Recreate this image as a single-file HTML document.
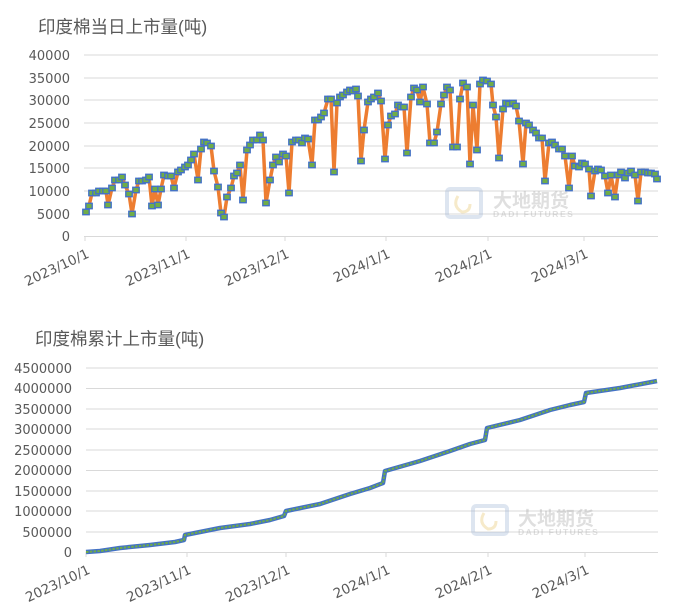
<!DOCTYPE html>
<html><head><meta charset="utf-8"><style>
html,body{margin:0;padding:0;background:#fff;}
svg text{font-family:"DejaVu Sans","Noto Sans CJK SC",sans-serif;fill:#595959;}
svg text.t{font-family:"Liberation Sans","Noto Sans CJK SC",sans-serif;}
</style></head><body>
<svg width="695" height="610" viewBox="0 0 695 610" xmlns="http://www.w3.org/2000/svg">
<defs>
<marker id="m" viewBox="0 0 8 7" refX="4" refY="3.5" markerWidth="8" markerHeight="7" markerUnits="userSpaceOnUse">
<rect x="0.8" y="0.8" width="6.4" height="5.4" fill="#70ad47" stroke="#4472c4" stroke-width="1.4"/>
</marker>
</defs>
<text class="t" x="38" y="33" font-size="17.5">印度棉当日上市量(吨)</text>
<g stroke="#d9d9d9" stroke-width="1">
<line x1="84" y1="55" x2="658" y2="55"/><line x1="84" y1="78" x2="658" y2="78"/>
<line x1="84" y1="100" x2="658" y2="100"/><line x1="84" y1="123" x2="658" y2="123"/>
<line x1="84" y1="146" x2="658" y2="146"/><line x1="84" y1="168" x2="658" y2="168"/>
<line x1="84" y1="191" x2="658" y2="191"/><line x1="84" y1="214" x2="658" y2="214"/>
<line x1="84" y1="236.5" x2="658" y2="236.5"/>
<line x1="85" y1="236" x2="85" y2="241"/><line x1="186" y1="236" x2="186" y2="241"/>
<line x1="285" y1="236" x2="285" y2="241"/><line x1="386" y1="236" x2="386" y2="241"/>
<line x1="488" y1="236" x2="488" y2="241"/><line x1="584" y1="236" x2="584" y2="241"/>
</g>
<g font-size="13" text-anchor="end">
<text x="70" y="60">40000</text><text x="70" y="83">35000</text><text x="70" y="105">30000</text>
<text x="70" y="128">25000</text><text x="70" y="151">20000</text><text x="70" y="173">15000</text>
<text x="70" y="196">10000</text><text x="70" y="219">5000</text><text x="70" y="241">0</text>
</g>
<g font-size="13.5" text-anchor="end">
<text transform="translate(90,257) rotate(-25)">2023/10/1</text>
<text transform="translate(191,257) rotate(-25)">2023/11/1</text>
<text transform="translate(290,257) rotate(-25)">2023/12/1</text>
<text transform="translate(391,257) rotate(-25)">2024/1/1</text>
<text transform="translate(493,257) rotate(-25)">2024/2/1</text>
<text transform="translate(589,257) rotate(-25)">2024/3/1</text>
</g>
<g opacity="0.35">
<rect x="447" y="189" width="34" height="28" rx="3" fill="none" stroke="#9fb6d6" stroke-width="4"/>
<path d="M458 196 q-6 10 4 16 q8 0 8-8" fill="none" stroke="#e8c46a" stroke-width="3"/>
<text class="t" x="493" y="207" font-size="19" font-weight="bold" style="fill:#a6a6a6">大地期货</text>
<text class="t" x="493" y="217" font-size="8.5" font-weight="bold" letter-spacing="1.5" style="fill:#a6a6a6">DADI FUTURES</text>
</g>
<polyline fill="none" stroke="#ed7d31" stroke-width="3.5" stroke-linejoin="round" marker-start="url(#m)" marker-mid="url(#m)" marker-end="url(#m)" points="86,212 89,206 92,193 96,193 99,191 103,191 106,191 108,205 112,188 115,180 119,180 122,177 125,185 129,194 132,214 136,190 139,181 142,181 146,180 149,177 152,206 155,189 158,205 161,189 164,175 168,176 171,176 174,188 178,172 181,170 185,167 188,165 191,160 194,154 198,180 201,149 204,142 207,143 211,146 214,171 218,187 221,213 224,217 227,197 231,188 234,176 237,173 240,165 243,200 247,150 250,145 253,140 257,140 260,135 263,140 266,203 270,180 273,165 276,157 279,162 283,154 286,156 289,193 292,142 296,140 299,140 302,143 305,138 308,139 312,165 315,120 318,120 321,117 324,113 328,99 331,99 334,172 337,103 340,97 343,95 347,92 350,90 353,91 356,89 358,96 361,161 364,130 368,102 371,99 374,97 378,93 381,101 385,159 388,125 391,116 395,114 398,105 401,107 404,107 407,153 411,97 414,88 417,90 420,102 423,87 427,104 430,143 434,143 437,132 441,104 444,95 447,87 450,90 453,147 457,147 460,99 463,83 467,87 470,164 473,105 477,150 480,84 483,80 487,81 491,84 493,105 496,117 499,158 503,109 506,103 509,104 513,103 516,106 519,121 523,164 526,123 529,125 533,130 536,133 539,138 542,138 545,181 549,143 552,142 555,145 559,149 562,149 565,156 569,188 572,156 575,166 579,167 582,163 585,164 589,169 591,196 595,171 598,169 601,170 605,176 608,193 611,175 615,197 618,175 621,172 625,178 628,173 631,171 635,175 638,201 641,172 645,172 648,173 651,173 655,174 657,179"/>

<text class="t" x="35" y="345" font-size="17.5">印度棉累计上市量(吨)</text>
<g stroke="#d9d9d9" stroke-width="1">
<line x1="86" y1="368" x2="658" y2="368"/><line x1="86" y1="388.5" x2="658" y2="388.5"/>
<line x1="86" y1="409" x2="658" y2="409"/><line x1="86" y1="429" x2="658" y2="429"/>
<line x1="86" y1="450" x2="658" y2="450"/><line x1="86" y1="470.5" x2="658" y2="470.5"/>
<line x1="86" y1="491" x2="658" y2="491"/><line x1="86" y1="511" x2="658" y2="511"/>
<line x1="86" y1="532" x2="658" y2="532"/><line x1="86" y1="552.5" x2="658" y2="552.5"/>
<line x1="86" y1="552" x2="86" y2="557"/><line x1="187" y1="552" x2="187" y2="557"/>
<line x1="286" y1="552" x2="286" y2="557"/><line x1="386" y1="552" x2="386" y2="557"/>
<line x1="488" y1="552" x2="488" y2="557"/><line x1="585" y1="552" x2="585" y2="557"/>
</g>
<g font-size="13" text-anchor="end">
<text x="72" y="373">4500000</text><text x="72" y="393">4000000</text><text x="72" y="414">3500000</text>
<text x="72" y="434">3000000</text><text x="72" y="455">2500000</text><text x="72" y="475">2000000</text>
<text x="72" y="496">1500000</text><text x="72" y="516">1000000</text><text x="72" y="537">500000</text>
<text x="72" y="557">0</text>
</g>
<g font-size="13.5" text-anchor="end">
<text transform="translate(91,573) rotate(-25)">2023/10/1</text>
<text transform="translate(192,573) rotate(-25)">2023/11/1</text>
<text transform="translate(291,573) rotate(-25)">2023/12/1</text>
<text transform="translate(391,573) rotate(-25)">2024/1/1</text>
<text transform="translate(493,573) rotate(-25)">2024/2/1</text>
<text transform="translate(590,573) rotate(-25)">2024/3/1</text>
</g>
<g opacity="0.35">
<rect x="473" y="506" width="34" height="28" rx="3" fill="none" stroke="#9fb6d6" stroke-width="4"/>
<path d="M484 513 q-6 10 4 16 q8 0 8-8" fill="none" stroke="#e8c46a" stroke-width="3"/>
<text class="t" x="518" y="525" font-size="19" font-weight="bold" style="fill:#a6a6a6">大地期货</text>
<text class="t" x="518" y="535" font-size="8.5" font-weight="bold" letter-spacing="1.5" style="fill:#a6a6a6">DADI FUTURES</text>
</g>
<polyline fill="none" stroke="#4472c4" stroke-width="4.5" stroke-linejoin="round" points="86,552 100,551 120,548 150,545 175,542 184,540 185,535 220,528 250,524 270,520 284,516 286,511 320,504 350,494 370,488 383,483 385,471 420,461 450,451 470,444 485,440 487,428 520,420 550,410 570,405 584,402 586,393 620,388 657,381"/>
<polyline fill="none" stroke="#70ad47" stroke-width="2" stroke-dasharray="2.5 1.3" points="86,552 100,551 120,548 150,545 175,542 184,540 185,535 220,528 250,524 270,520 284,516 286,511 320,504 350,494 370,488 383,483 385,471 420,461 450,451 470,444 485,440 487,428 520,420 550,410 570,405 584,402 586,393 620,388 657,381"/>
</svg>
</body></html>
